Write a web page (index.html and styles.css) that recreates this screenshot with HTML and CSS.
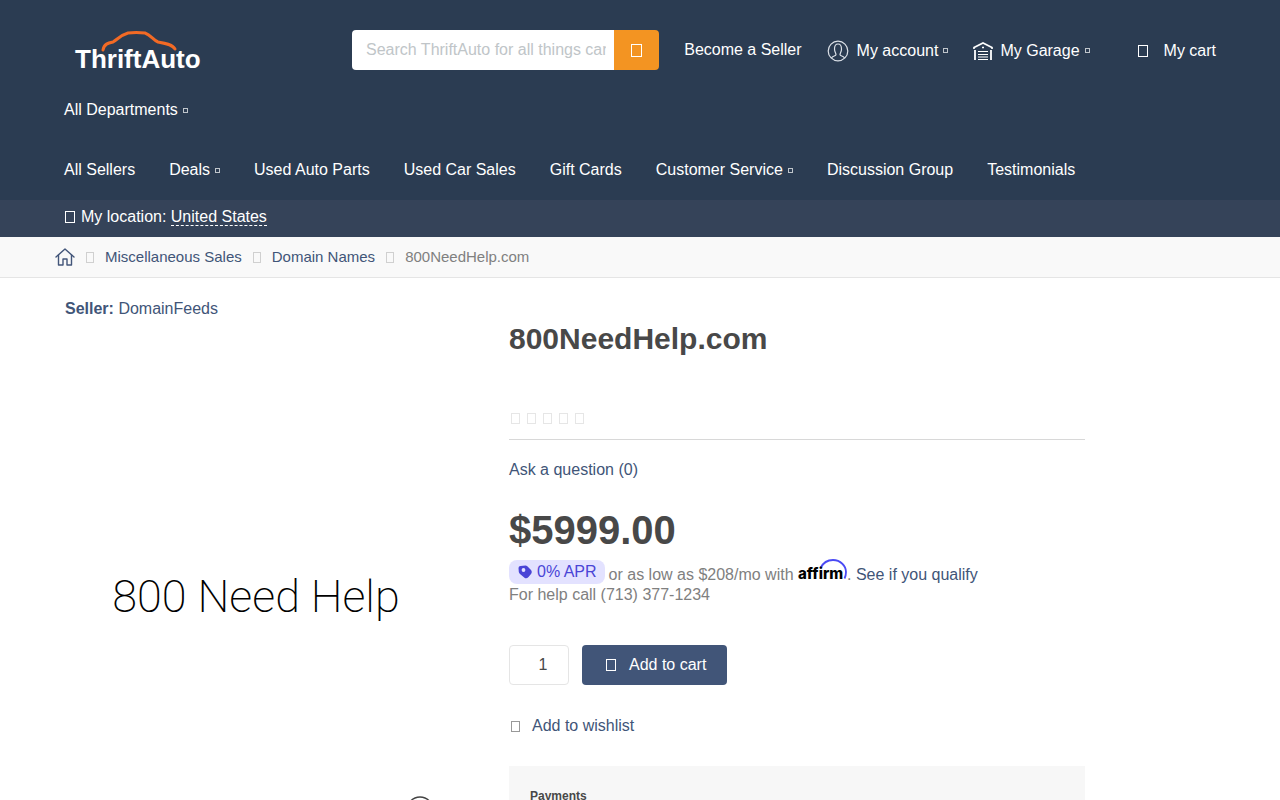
FILE: index.html
```html
<!DOCTYPE html>
<html lang="en">
<head>
  <meta charset="UTF-8">
  <meta name="viewport" content="width=device-width, initial-scale=1">
  <title>800NeedHelp.com - ThriftAuto</title>
  <link rel="stylesheet" href="styles.css">
</head>
<body>
  <header class="header">
    <div class="top-row">
      <a href="#" class="logo" aria-label="ThriftAuto">
        <svg width="130" height="42" viewBox="0 0 130 42">
          <path d="M29 20C30 14 34 13 39 12C44 9 47 5 54 3Q62 2 71 3C77 5 79 10 84 12C90 13 98 14 101 19" fill="none" stroke="#f26a25" stroke-width="3" stroke-linecap="round"/>
          <text x="1" y="38" class="logo-text">ThriftAuto</text>
        </svg>
      </a>
      <form class="search">
        <input type="text" placeholder="Search ThriftAuto for all things cars" aria-label="Search">
        <button type="button" aria-label="Search"><i class="glyph large"></i></button>
      </form>
      <nav class="top-links">
        <a href="#" class="seller-link">Become a Seller</a>
        <a href="#" class="account-link">
          <svg width="22" height="22" viewBox="0 0 22 22" fill="none" stroke="#dde2e9" stroke-width="1.2">
            <circle cx="11" cy="11" r="9.8"/>
            <path d="M4.500 18C5.500 15.500 9 16.500 9 14.500C9 13 7.500 12 7.500 9C7.500 5.500 8.500 4 11 4S14.500 5.500 14.500 9C14.500 12 13 13 13 14.500C13 16.500 16.500 15.500 17.500 18"/>
          </svg>
          <span>My account</span><i class="glyph tiny"></i>
        </a>
        <a href="#" class="garage-link">
          <svg width="20" height="20" viewBox="0 0 20 20" fill="none" stroke="#fff">
            <path d="M1 8V6.500L10 2L19 6.500V8" stroke-width="1.700"/>
            <path d="M2 9V19M18 9V19" stroke-width="1.800"/>
            <path d="M5 10.500H15M5 13.500H15M5 16H15M5 18.500H15" stroke-width="1.200"/>
            <path d="M9 6.500H11" stroke-width="1.500"/>
          </svg>
          <span>My Garage</span><i class="glyph tiny"></i>
        </a>
        <a href="#" class="cart-link"><i class="glyph"></i><span>My cart</span></a>
      </nav>
    </div>
    <div class="departments">
      <a href="#">All Departments<i class="glyph tiny"></i></a>
    </div>
    <nav class="main-nav">
      <a href="#">All Sellers</a>
      <a href="#">Deals<i class="glyph tiny"></i></a>
      <a href="#">Used Auto Parts</a>
      <a href="#">Used Car Sales</a>
      <a href="#">Gift Cards</a>
      <a href="#">Customer Service<i class="glyph tiny"></i></a>
      <a href="#">Discussion Group</a>
      <a href="#">Testimonials</a>
    </nav>
  </header>

  <div class="location">
    <i class="glyph"></i>
    <span>My location: <a href="#">United States</a></span>
  </div>

  <nav class="breadcrumbs">
    <a href="#" class="home" aria-label="Home">
      <svg width="20" height="18" viewBox="0 0 20 18" fill="none" stroke="#43567a" stroke-width="1.4" stroke-linejoin="round" stroke-linecap="round">
        <path d="M1 9L10 1L19 9"/>
        <path d="M3.500 7V17H8V11H12V17H16.500V7"/>
      </svg>
    </a>
    <i class="glyph small"></i>
    <a href="#">Miscellaneous Sales</a>
    <i class="glyph small"></i>
    <a href="#">Domain Names</a>
    <i class="glyph small"></i>
    <span>800NeedHelp.com</span>
  </nav>

  <main class="product">
    <section class="gallery">
      <div class="seller"><strong>Seller:</strong> <a href="#">DomainFeeds</a></div>
      <div class="picture">800 Need Help</div>
      <div class="zoom-row">
        <svg width="28" height="28" viewBox="0 0 28 28" fill="none" stroke="#444" stroke-width="1.300">
          <circle cx="14" cy="14" r="13"/>
          <path d="M14 8V20M8 14H20"/>
        </svg>
      </div>
    </section>

    <section class="details">
      <h1>800NeedHelp.com</h1>
      <div class="rating">
        <i class="glyph small"></i><i class="glyph small"></i><i class="glyph small"></i><i class="glyph small"></i><i class="glyph small"></i>
      </div>
      <a href="#" class="question">Ask a question (0)</a>
      <div class="price">$5999.00</div>
      <div class="financing">
        <span class="apr">
          <svg width="14" height="14" viewBox="0 0 14 14">
            <path d="M2.500 1L7.500 0.500Q8.500 0.500 9.300 1.300L13 5Q14.500 7 13 9L10.500 12Q8.500 14 6.500 12.700L2 9Q1 8 0.800 7L0.500 3Q0.500 1 2.500 1Z" fill="#4a45d6"/>
            <circle cx="5.500" cy="5" r="1.900" fill="#e3e2ff"/>
          </svg>
          0% APR
        </span>
        <span class="terms">or as low as $208/mo with
          <svg class="affirm" width="49" height="21" viewBox="0 0 49 21" role="img" aria-label="affirm">
            <path d="M22.500 9C25 4 30 1 35 1C42.500 1 48 7 48 13C48 15.500 47.500 17.500 46.500 19.500" fill="none" stroke="#4a4af4" stroke-width="1.800"/>
            <text x="0" y="20" class="affirm-text">affirm</text>
          </svg>.
          <a href="#">See if you qualify</a>
        </span>
      </div>
      <div class="help">For help call (713) 377-1234</div>
      <form class="buy">
        <input type="text" value="1" aria-label="Quantity">
        <button type="button"><i class="glyph"></i>Add to cart</button>
      </form>
      <button type="button" class="wishlist"><i class="glyph small"></i>Add to wishlist</button>
      <div class="payments">
        <h2>Payments</h2>
      </div>
    </section>
  </main>
</body>
</html>
```
FILE: styles.css
```css
* {
  box-sizing: border-box;
}
body {
  margin: 0;
  font-family: "Liberation Sans", Arial, sans-serif;
  font-size: 16px;
  line-height: 20px;
  color: #808080;
  background-color: #fff;
}
a {
  color: #415578;
  text-decoration: none;
}
input, button {
  font: inherit;
}
svg {
  flex: none;
}

/* hollow icon boxes */
.glyph {
  display: inline-block;
  flex: none;
  width: 10px;
  height: 12px;
  border: 1px solid currentColor;
}
.glyph.large {
  width: 11px;
  height: 13px;
}
.glyph.small {
  width: 9px;
  height: 11px;
}
.glyph.tiny {
  width: 5px;
  height: 5px;
  margin-left: 5px;
  opacity: 0.7;
}

/* header */
.header {
  background-color: #2b3c52;
  padding: 0 64px;
}
.header a {
  display: flex;
  align-items: center;
  color: #fff;
  white-space: nowrap;
}
.top-row {
  display: flex;
  align-items: center;
  height: 100px;
}
.header .logo {
  width: 288px;
  padding: 2px 0 0 10px;
}
.logo-text {
  font-family: "Liberation Sans", Arial, sans-serif;
  font-size: 26px;
  font-weight: 700;
  fill: #fff;
}
.search {
  display: flex;
  flex: 1;
  height: 40px;
}
.search input {
  flex: 1;
  min-width: 0;
  padding: 0 8px 0 14px;
  border: none;
  border-radius: 4px 0 0 4px;
  background-color: #fff;
}
.search input::placeholder {
  color: #c0c5c8;
}
.search button {
  display: flex;
  align-items: center;
  justify-content: center;
  width: 45px;
  padding: 0;
  border: none;
  border-radius: 0 4px 4px 0;
  background-color: #f39422;
  color: #fff;
}
.top-links {
  display: flex;
  align-items: center;
}
.top-links .seller-link {
  margin: 0 25px;
}
.top-links .account-link,
.top-links .garage-link,
.top-links .cart-link {
  padding-top: 1px;
}
.account-link svg {
  margin-right: 8px;
}
.top-links .garage-link {
  margin: 0 48px 0 25px;
}
.garage-link svg {
  margin-right: 7px;
}
.cart-link .glyph {
  margin-right: 16px;
}
.departments {
  display: flex;
  height: 20px;
}
.main-nav {
  display: flex;
  gap: 34px;
  height: 80px;
  padding: 40px 0 20px;
}
.location {
  display: flex;
  align-items: center;
  gap: 6px;
  height: 37px;
  padding: 0 65px 4px;
  background-color: #354359;
  color: #fff;
}
.location a {
  color: #fff;
  border-bottom: 1px dashed #fff;
}

/* breadcrumbs */
.breadcrumbs {
  display: flex;
  align-items: center;
  gap: 11px;
  height: 41px;
  padding: 0 55px;
  border-bottom: 1px solid #e5e5e5;
  background-color: #f9f9f9;
  font-size: 15px;
}
.breadcrumbs .glyph {
  width: 8px;
  color: #d0d0d0;
}
.home {
  display: flex;
}

/* product */
.product {
  display: grid;
  grid-template-columns: 4fr 6fr;
  column-gap: 61px;
  padding: 0 195px 0 64px;
}
.seller {
  padding: 21px 0 0 1px;
  color: #415578;
}
.picture {
  display: flex;
  align-items: center;
  justify-content: center;
  margin-top: 86px;
  aspect-ratio: 1;
  font-family: Roboto, sans-serif;
  font-size: 45px;
  font-weight: 200;
  color: #000;
}
.zoom-row {
  display: flex;
  justify-content: flex-end;
  padding: 7px 14px;
}
h1 {
  margin: 41px 0 0;
  font-size: 30px;
  line-height: 40px;
  color: #484848;
}
.rating {
  display: flex;
  align-items: center;
  gap: 7px;
  height: 42px;
  margin-top: 39px;
  padding: 0 2px;
  border-bottom: 1px solid #d8d8d8;
  color: #e6e6e6;
}
.question {
  display: block;
  margin-top: 20px;
}
.price {
  margin-top: 25px;
  font-size: 40px;
  font-weight: bold;
  line-height: 50px;
  color: #484848;
}
.financing {
  display: flex;
  gap: 4px;
  height: 24px;
  margin-top: 5px;
  white-space: nowrap;
}
.apr {
  display: flex;
  align-items: center;
  gap: 5px;
  height: 24px;
  padding: 0 8px 0 9px;
  border-radius: 8px;
  background-color: #e3e2ff;
  color: #4a45d6;
}
.terms {
  padding-top: 5px;
}
.affirm {
  margin-top: -6px;
  overflow: visible;
}
.affirm-text {
  font-family: Inter, sans-serif;
  font-size: 15px;
  font-weight: 800;
  fill: #000;
}
.help {
  margin-top: 1px;
}
.buy {
  display: flex;
  gap: 13px;
  margin-top: 40px;
}
.buy input {
  width: 60px;
  height: 40px;
  padding: 0 0 0 8px;
  border: 1px solid #e5e5e5;
  border-radius: 4px;
  color: #484848;
  text-align: center;
}
.buy button {
  display: flex;
  align-items: center;
  gap: 13px;
  height: 40px;
  padding: 0 21px 0 24px;
  border: none;
  border-radius: 4px;
  background-color: #415578;
  color: #fff;
}
.wishlist {
  display: flex;
  align-items: center;
  gap: 12px;
  margin-top: 31px;
  padding: 0 2px;
  border: none;
  background: none;
  color: #415578;
}
.wishlist .glyph {
  color: #999;
}
.payments {
  margin-top: 30px;
  padding: 20px 21px;
  background-color: #f7f7f7;
}
.payments h2 {
  margin: 0;
  font-size: 12px;
  line-height: 20px;
  color: #484848;
}
```
